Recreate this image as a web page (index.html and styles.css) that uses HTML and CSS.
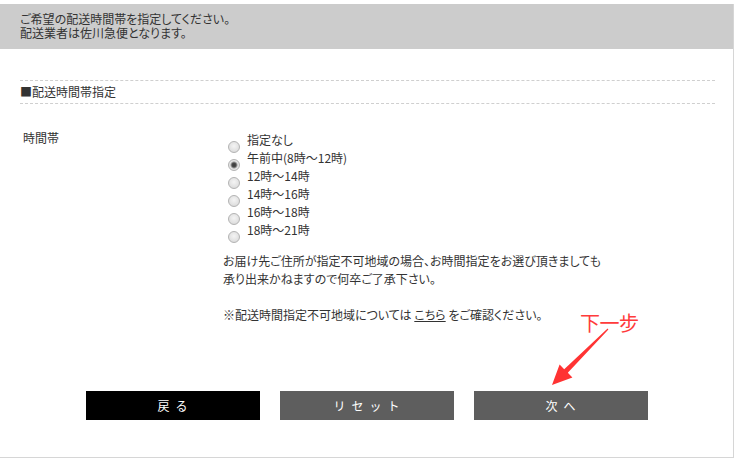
FILE: index.html
```html
<!DOCTYPE html>
<html lang="ja">
<head>
<meta charset="utf-8">
<title>配送時間帯指定</title>
<link rel="stylesheet" href="styles.css">
</head>
<body>
<div class="page">
  <div class="head">
    ご希望の配送時間帯を指定してください。<br>
    配送業者は佐川急便となります。
  </div>
  <div class="main">
    <div class="sec-title">■配送時間帯指定</div>
    <div class="field">
      <div class="field-label">時間帯</div>
      <div class="field-body">
        <label class="opt"><input type="radio" name="t" class="radio"><span>指定なし</span></label>
        <label class="opt"><input type="radio" name="t" class="radio" checked><span>午前中(8時～12時)</span></label>
        <label class="opt"><input type="radio" name="t" class="radio"><span>12時～14時</span></label>
        <label class="opt"><input type="radio" name="t" class="radio"><span>14時～16時</span></label>
        <label class="opt"><input type="radio" name="t" class="radio"><span>16時～18時</span></label>
        <label class="opt"><input type="radio" name="t" class="radio"><span>18時～21時</span></label>
        <p class="note">お届け先ご住所が指定不可地域の場合、お時間指定をお選び頂きましても<br>承り出来かねますので何卒ご了承下さい。<br><br>※配送時間指定不可地域については <a class="link" href="#">こちら</a> をご確認ください。</p>
      </div>
    </div>
  </div>
  <div class="buttons">
    <button class="btn btn-back">戻る</button>
    <button class="btn btn-gray">リセット</button>
    <button class="btn btn-gray">次へ</button>
  </div>
  <div class="anno-text">下一步</div>
  <svg class="anno-arrow" width="80" height="75" viewBox="0 0 80 75">
    <polygon fill="#ff3333" points="67.6,8.6 24.2,49.2 19.6,44.6 12,65 32.4,57.4 27.8,52.8 68.4,9.4"/>
  </svg>
</div>
</body>
</html>
```

FILE: styles.css
```css
* { box-sizing: border-box; }
body {
  margin: 0;
  background: #fff;
  font-family: "Noto Sans CJK JP", sans-serif;
  font-feature-settings: "palt";
  font-size: 12px;
  color: #333;
}
.page {
  position: relative;
  margin-top: 4px;
  width: 734px;
  border-right: 1px solid #d6d6d6;
  border-bottom: 1px solid #d6d6d6;
}
.head {
  background: #cccccc;
  padding: 8px 20px 9px;
  line-height: 14px;
  height: 45px;
}
.main {
  padding: 31px 18px 0 20px;
}
.sec-title {
  border-top: 1px dashed #cfcfcf;
  border-bottom: 1px dashed #cfcfcf;
  height: 24px;
  line-height: 22px;
}
.field {
  margin-top: 27px;
  padding-left: 3px;
  display: grid;
  grid-template-columns: 200px 1fr;
}
.field-label {
  line-height: 14px;
}
.field-body {
  display: flex;
  flex-direction: column;
}
.opt {
  display: flex;
  align-items: flex-start;
  height: 18px;
  line-height: 18px;
}
.radio {
  appearance: none;
  -webkit-appearance: none;
  width: 12px;
  height: 12px;
  margin: 10px 7px 0 5px;
  border: 1px solid #b3b3b3;
  border-radius: 50%;
  background: radial-gradient(circle at 50% 40%, #f4f4f4 0%, #e2e2e2 60%, #d4d4d4 100%);
  flex: none;
}
.radio:checked {
  background: radial-gradient(circle at 50% 50%, #3a3a3a 0, #4a4a4a 2px, #9a9a9a 3px, #e6e6e6 4px, #dcdcdc 100%);
}
.note {
  margin: 13px 0 0;
  line-height: 18px;
}
.link {
  color: #333;
  text-decoration: underline;
}
.buttons {
  display: flex;
  justify-content: center;
  gap: 20px;
  margin-top: 67px;
  padding-bottom: 37px;
}
.btn {
  width: 174px;
  height: 29px;
  border: none;
  color: #fff;
  font-family: "Noto Sans CJK JP", sans-serif;
  font-size: 12px;
  letter-spacing: 6px;
  text-indent: 6px;
  padding: 0;
  cursor: pointer;
}
.btn-back { background: #000; }
.btn-gray { background: #5e5e5e; }
.anno-text {
  position: absolute;
  left: 580px;
  top: 309px;
  font-family: "Noto Sans CJK SC", sans-serif;
  font-size: 20px;
  line-height: 20px;
  color: #ff3b3b;
  letter-spacing: -0.5px;
}
.anno-arrow {
  position: absolute;
  left: 540px;
  top: 316px;
}
```
